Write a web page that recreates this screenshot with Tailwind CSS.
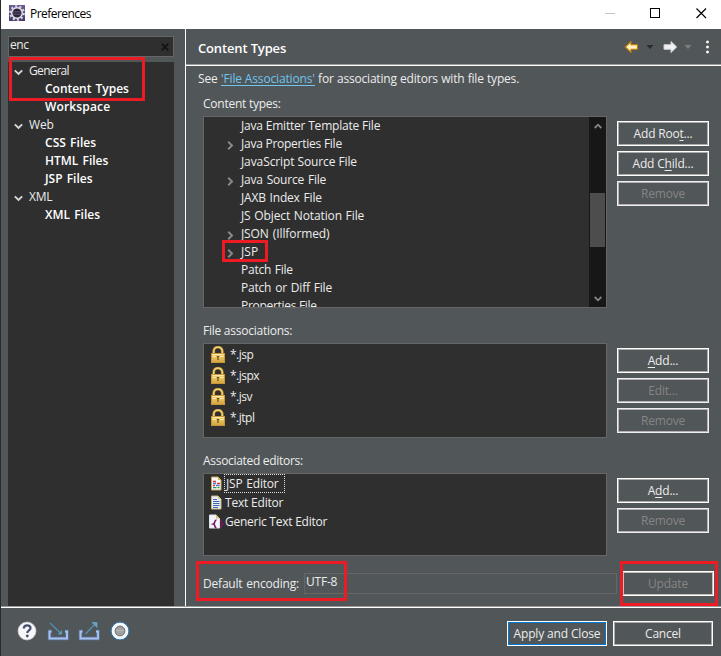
<!DOCTYPE html>
<html lang="en">
<head>
<meta charset="utf-8">
<title>Preferences</title>
<script src="https://cdn.jsdelivr.net/npm/@tailwindcss/browser@4"></script>
</head>
<body class="w-[721px] h-[656px] overflow-hidden">
<svg class="absolute h-0 w-0">
  <defs>
    <linearGradient id="gold" x1="0" y1="0" x2="0" y2="1"><stop offset="0" stop-color="#f3d878"/><stop offset="1" stop-color="#d3a33c"/></linearGradient>
    <linearGradient id="lilac" x1="0" y1="0" x2="0" y2="1"><stop offset="0" stop-color="#6b5a94"/><stop offset="1" stop-color="#463a6c"/></linearGradient>
    <symbol id="lock" viewBox="0 0 14 17">
      <path d="M2.700 8V5.300a4.300 4.200 0 0 1 8.600 0V8" fill="none" stroke="#b98924" stroke-width="2.800"/>
      <path d="M2.700 8V5.300a4.300 4.200 0 0 1 8.600 0V8" fill="none" stroke="#f0d98c" stroke-width="1.300"/>
      <rect x=".5" y="7.500" width="13" height="9" fill="url(#gold)" stroke="#c9973a"/>
      <path d="M1.500 8.500h11M1.500 10.500h11" stroke="#fae9a8" stroke-width="1"/>
      <path d="M5.700 10.500h2.600M7 10v4" stroke="#6d4a13" stroke-width="1.200"/>
    </symbol>
    <symbol id="open" viewBox="0 0 9 7"><path d="M.8 1.300 4.500 5l3.700-3.700" fill="none" stroke="#d6d6d6" stroke-width="1.900"/></symbol>
    <symbol id="closed" viewBox="0 0 7 9"><path d="M1.200.8 5 4.500 1.200 8.200" fill="none" stroke="#8a8a8a" stroke-width="1.900"/></symbol>
  </defs>
</svg>
<div class="relative flex h-[656px] w-[721px] flex-col border-l border-[#2a2a2a] bg-[#515658] font-['Open_Sans','Noto_Sans',sans-serif] text-[12px] leading-[18px] tracking-[-0.2px] text-[#ececec] whitespace-nowrap">

  <!-- Title bar -->
  <header class="flex h-[29px] shrink-0 items-center bg-white pl-2 text-black">
    <svg class="mt-[-3px] h-4 w-4" viewBox="0 0 16 16">
      <rect width="16" height="16" fill="url(#lilac)"/>
      <circle cx="8" cy="8" r="6.800" fill="none" stroke="#d8d5de" stroke-width="2" stroke-dasharray="2.200 2.070"/>
      <circle cx="8" cy="8" r="5.300" fill="#29243a" stroke="#e8e6ec" stroke-width="1.500"/>
      <path d="M4 6.500h8M3.500 8h9M4 9.500h8" stroke="#5e5575" stroke-width=".7"/>
    </svg>
    <span class="mt-[-2px] ml-[5px] tracking-[-0.55px]">Preferences</span>
    <svg class="ml-auto mr-[14px] mt-[-3px] h-3 w-[102px]" viewBox="0 0 102 12">
      <path d="M0 6.500h10" stroke="#c4c4c4"/>
      <rect x="45.500" y="1.500" width="9" height="9" fill="none" stroke="#000"/>
      <path d="M91.500 1.500l9.500 9.500M101 1.500l-9.500 9.500" stroke="#000" stroke-width="1.150"/>
    </svg>
  </header>

  <main class="flex h-[577px] shrink-0">
    <!-- Navigation -->
    <aside class="w-[184px] shrink-0 pt-[7px] pl-[7px]">
      <div class="flex h-[21px] w-[166px] items-center border border-[#666] bg-[#2f2f2f] pl-px pr-1">
        <span class="mt-[-4px] tracking-[-0.4px]">enc</span>
        <svg class="ml-auto h-2 w-2" viewBox="0 0 8 8"><path d="M.7.700l6.600 6.600M7.300.7.700 7.300" stroke="#131313" stroke-width="1.700"/></svg>
      </div>
      <nav class="mt-[5px] h-[544px] w-[166px] bg-[#2f2f2f]">
        <div class="flex h-[18px] items-center"><svg class="mt-[2px] ml-[6px] mr-[6px] h-[7px] w-[9px]"><use href="#open"/></svg><span class="tracking-[-0.6px]">General</span></div>
        <div class="h-[18px] pl-[37px] font-semibold text-white"><span class="tracking-[-0.02px] [word-spacing:1px]">Content Types</span></div>
        <div class="h-[18px] pl-[37px] font-semibold text-white"><span class="tracking-[0.15px]">Workspace</span></div>
        <div class="flex h-[18px] items-center"><svg class="mt-[2px] ml-[6px] mr-[6px] h-[7px] w-[9px]"><use href="#open"/></svg><span>Web</span></div>
        <div class="h-[18px] pl-[37px] font-semibold text-white"><span class="tracking-[0.05px] [word-spacing:1px]">CSS Files</span></div>
        <div class="h-[18px] pl-[37px] font-semibold text-white"><span class="tracking-[0px] [word-spacing:1px]">HTML Files</span></div>
        <div class="h-[18px] pl-[37px] font-semibold text-white"><span class="tracking-[0px] [word-spacing:1px]">JSP Files</span></div>
        <div class="flex h-[18px] items-center"><svg class="mt-[2px] ml-[6px] mr-[6px] h-[7px] w-[9px]"><use href="#open"/></svg><span>XML</span></div>
        <div class="h-[18px] pl-[37px] font-semibold text-white"><span class="tracking-[0px] [word-spacing:1px]">XML Files</span></div>
      </nav>
    </aside>

    <section class="flex w-[536px] flex-col border-l border-white">
      <div class="flex h-[37px] shrink-0 items-center border-b border-white pl-3 shadow-[inset_0_-1px_0_#999]">
        <h1 class="mt-[2px] text-[13px] font-semibold text-white tracking-[-0.15px]">Content Types</h1>
        <svg class="ml-auto mr-[9px] h-[16px] w-[88px]" viewBox="0 0 88 16">
          <path d="M1.300 8 7 2.500v3.200h6.500v4.600H7v3.200z" fill="#fff3bd" stroke="#b97a14" stroke-width="1.200" stroke-linejoin="round"/>
          <path d="M22.500 6h7l-3.500 4z" fill="#2b2b2b"/>
          <path d="M52.700 8 47 2.500v3.200h-7v4.600h7v3.200z" fill="#f2f2f2" stroke="#cfcfcf" stroke-linejoin="round"/>
          <path d="M60.500 6h7L64 10z" fill="#7b7f80"/>
          <g fill="#fff" stroke="#333" stroke-width=".5"><circle cx="83.500" cy="3" r="1.800"/><circle cx="83.500" cy="8" r="1.800"/><circle cx="83.500" cy="13" r="1.800"/></g>
        </svg>
      </div>

      <div class="pl-[17px]">
        <p class="-ml-[5px] mt-[4px] h-[18px]"><span class="[word-spacing:0.6px]">See </span><a class="inline-block h-[16px] border-b border-[#6fc5ee] leading-[18px] tracking-[-0.15px] text-[#6fc5ee]">'File Associations'</a><span class="[word-spacing:0.4px]"> for associating editors with file types.</span></p>
        <p class="mt-[7px] h-[21px]"><span class="tracking-[-0.25px]">Content types:</span></p>
        <div class="flex h-[192px] gap-[10px]">
          <div class="flex w-[404px] overflow-hidden border border-[#666] bg-[#2f2f2f]">
            <ul class="w-[385px]">
              <li class="h-[18px] pl-[37px]"><span>Java Emitter Template File</span></li>
              <li class="flex h-[18px] items-center pl-[23px]"><svg class="mt-[3px] mr-[7px] h-[9px] w-[7px]"><use href="#closed"/></svg><span class="tracking-[-0.25px]">Java Properties File</span></li>
              <li class="h-[18px] pl-[37px]"><span class="tracking-[-0.1px]">JavaScript Source File</span></li>
              <li class="flex h-[18px] items-center pl-[23px]"><svg class="mt-[3px] mr-[7px] h-[9px] w-[7px]"><use href="#closed"/></svg><span class="[word-spacing:1px]">Java Source File</span></li>
              <li class="h-[18px] pl-[37px]"><span class="[word-spacing:1px]">JAXB Index File</span></li>
              <li class="h-[18px] pl-[37px]"><span class="tracking-[-0.1px] [word-spacing:0.6px]">JS Object Notation File</span></li>
              <li class="flex h-[18px] items-center pl-[23px]"><svg class="mt-[3px] mr-[7px] h-[9px] w-[7px]"><use href="#closed"/></svg><span class="tracking-[-0.1px] [word-spacing:1px]">JSON (Illformed)</span></li>
              <li class="flex h-[18px] items-center pl-[23px]"><svg class="mt-[3px] mr-[7px] h-[9px] w-[7px]"><use href="#closed"/></svg><span class="tracking-[0.1px]">JSP</span></li>
              <li class="h-[18px] pl-[37px]"><span class="[word-spacing:0.5px]">Patch File</span></li>
              <li class="h-[18px] pl-[37px]"><span class="[word-spacing:1px]">Patch or Diff File</span></li>
              <li class="h-[18px] pl-[37px]"><span class="tracking-[-0.3px]">Properties File</span></li>
            </ul>
            <div class="flex w-[17px] flex-col items-center bg-[#171717]">
              <svg class="mt-[6px] h-[6px] w-[8px]" viewBox="0 0 8 6"><path d="M.7 5 4 1.700 7.300 5" fill="none" stroke="#858585" stroke-width="1.800"/></svg>
              <div class="mt-[64px] h-[54px] w-[15px] bg-[#4d4d4d]"></div>
              <svg class="mt-auto mb-[5px] h-[6px] w-[8px]" viewBox="0 0 8 6"><path d="M.7 1 4 4.300 7.300 1" fill="none" stroke="#858585" stroke-width="1.800"/></svg>
            </div>
          </div>
          <div class="flex flex-col gap-[5px] pt-[5px]">
            <button class="h-[25px] w-[92px] border border-white shadow-[inset_0_0_0_1px_#aaa]">Add Roo<u class="underline-offset-2">t</u>...</button>
            <button class="h-[25px] w-[92px] border border-white shadow-[inset_0_0_0_1px_#aaa]">Add C<u class="underline-offset-2">h</u>ild...</button>
            <button class="h-[25px] w-[92px] border border-[#f0f0f0] text-[#858585] shadow-[inset_0_0_0_1px_#b5b0b5]">Remove</button>
          </div>
        </div>

        <p class="mt-[14px] h-[21px]"><span class="tracking-[-0.25px]">File associations:</span></p>
        <div class="flex h-[95px] gap-[10px]">
          <ul class="w-[404px] border border-[#666] bg-[#2f2f2f] pl-[7px]">
            <li class="flex h-[21px] items-center gap-[5px]"><svg class="mt-[-1px] h-[17px] w-[14px]"><use href="#lock"/></svg><span class="tracking-[-0.5px]">*.jsp</span></li>
            <li class="flex h-[21px] items-center gap-[5px]"><svg class="mt-[-1px] h-[17px] w-[14px]"><use href="#lock"/></svg><span class="tracking-[-0.5px]">*.jspx</span></li>
            <li class="flex h-[21px] items-center gap-[5px]"><svg class="mt-[-1px] h-[17px] w-[14px]"><use href="#lock"/></svg><span class="tracking-[-0.5px]">*.jsv</span></li>
            <li class="flex h-[21px] items-center gap-[5px]"><svg class="mt-[-1px] h-[17px] w-[14px]"><use href="#lock"/></svg><span class="tracking-[-0.5px]">*.jtpl</span></li>
          </ul>
          <div class="flex flex-col gap-[5px] pt-[5px]">
            <button class="h-[25px] w-[92px] border border-white shadow-[inset_0_0_0_1px_#aaa]"><u class="underline-offset-2">A</u>dd...</button>
            <button class="h-[25px] w-[92px] border border-[#f0f0f0] text-[#858585] shadow-[inset_0_0_0_1px_#b5b0b5]">Edit...</button>
            <button class="h-[25px] w-[92px] border border-[#f0f0f0] text-[#858585] shadow-[inset_0_0_0_1px_#b5b0b5]">Remove</button>
          </div>
        </div>

        <p class="mt-[14px] h-[21px]"><span class="tracking-[-0.3px]">Associated editors:</span></p>
        <div class="flex h-[83px] gap-[10px]">
          <ul class="w-[404px] border border-[#666] bg-[#2f2f2f] pl-[5px]">
            <li class="flex h-[19px] items-center">
              <svg class="mr-[1px] h-[15px] w-[14px]" viewBox="0 0 14 15"><path d="M2.500 1h6.500l3 3v10H2.500z" fill="#f8fafc" stroke="#c8a45a"/><path d="M9 1v3h3z" fill="#d9b254"/><path d="M4 5.500h3M8 7.500h3M4 9.500h2" stroke="#e03030" stroke-width="1.300"/><path d="M4 7.500h3M7 9.500h3.500" stroke="#4a78c8" stroke-width="1.300"/><path d="M4 11.700h3.500M8.500 11.700h2" stroke="#209a5a" stroke-width="1.300"/></svg>
              <span class="box-border flex h-[19px] w-[61px] items-center border border-dotted border-[#ddd] pl-px"><span class="[word-spacing:1px]">JSP Editor</span></span>
            </li>
            <li class="flex h-[19px] items-center">
              <svg class="mr-[2px] h-[15px] w-[14px]" viewBox="0 0 14 15"><path d="M2.500 1h6.500l3 3v10H2.500z" fill="#e8f1fb" stroke="#c5b583"/><path d="M9 1v3h3z" fill="#d9c284"/><path d="M4 4.500h4M4 6.500h6.500M4 8.500h6.500M4 10.500h6.500M4 12.500h5" stroke="#4467ac"/></svg>
              <span>Text Editor</span>
            </li>
            <li class="flex h-[19px] items-center">
              <svg class="mr-[2px] h-[15px] w-[14px] overflow-visible" viewBox="0 0 14 15"><path d="M.5 1H7l3.500 3.500V14H.5z" fill="#f0f4fa" stroke="#e0e4ea"/><path d="M7 .5v4h4z" fill="#d8bd6b"/><path d="M7.500 6C5 6 6.500 9.300 4.500 10 6.500 10.400 5 14 7.500 14" fill="none" stroke="#7a155e" stroke-width="1.700"/><path d="M11 6c2.500 0 .8 3.300 2.500 4-1.700.4 0 4-2.500 4" fill="none" stroke="#7a155e" stroke-width="1.500"/></svg>
              <span class="tracking-[-0.25px]">Generic Text Editor</span>
            </li>
          </ul>
          <div class="flex flex-col gap-[5px] pt-[5px]">
            <button class="h-[25px] w-[92px] border border-white shadow-[inset_0_0_0_1px_#aaa]">A<u class="underline-offset-2">d</u>d...</button>
            <button class="h-[25px] w-[92px] border border-[#f0f0f0] text-[#858585] shadow-[inset_0_0_0_1px_#b5b0b5]">Remove</button>
          </div>
        </div>

        <div class="mt-[15px] flex h-[25px] items-center">
          <span class="w-[101px]"><span class="[word-spacing:1px]">Default encoding:</span></span>
          <div class="h-[21px] w-[313px] border border-[#666] pl-px leading-[16px]"><span>UTF-8</span></div>
          <button class="ml-[5px] h-[25px] w-[92px] border border-white text-[#858585] shadow-[inset_0_0_0_1px_#c4c0b8]">Update</button>
        </div>
      </div>
    </section>
  </main>

  <!-- Dialog buttons -->
  <div class="h-px shrink-0 bg-[#999]"></div>
  <footer class="flex h-[49px] shrink-0 items-start border-t border-white pl-4 pr-2 pt-[13px]">
    <svg class="mt-[-1px] h-[22px] w-[116px]" viewBox="0 0 116 22">
      <circle cx="10" cy="11" r="9" fill="#f6f6f8" stroke="#c9ccd3" stroke-width=".7"/>
      <path d="M6.800 8.600C6.800 4.200 13.500 4.500 13.500 8c0 2.500-3.200 2.300-3.200 5" fill="none" stroke="#46516f" stroke-width="2.300"/><circle cx="10.300" cy="16" r="1.400" fill="#46516f"/>
      <g id="tray" fill="none"><path d="M34.500 11.500h-2v7h17.500v-7h-2" stroke="#5877aa" stroke-width="3.400"/><path d="M34.500 11.500h-2v7h17.500v-7h-2" stroke="#a9c1e6" stroke-width="1.900"/></g>
      <path d="M33 3l10.500 10" stroke="#4f91b5" stroke-width="1.300"/><path d="M45 14.500v-4.500l-4.500 4.500z" fill="#5a9cbd"/>
      <use href="#tray" x="31"/>
      <path d="M68.500 14 77 5" stroke="#4f91b5" stroke-width="1.300"/><path d="M75 2.500h5v5z" fill="#6aa3c4" stroke="#6aa3c4" stroke-width=".7"/>
      <circle cx="103" cy="11" r="8.900" fill="#f5f8fb" stroke="#2e77b4" stroke-width="1"/>
      <circle cx="103" cy="11" r="4.900" fill="#a0a0a0" stroke="#707070"/><path d="M99.500 10.500h7" stroke="#b8b8b8"/>
    </svg>
    <button class="ml-auto h-[25px] w-[100px] border border-white p-0 outline-1 -outline-offset-2 outline-[#0078d7]"><span class="tracking-[-0.15px]">Apply and Close</span></button>
    <button class="ml-[6px] h-[25px] w-[100px] border border-white shadow-[inset_0_0_0_1px_#aaa]"><span>Cancel</span></button>
  </footer>

  <!-- Highlight boxes -->
  <div class="absolute left-[8px] top-[57px] h-[44px] w-[136px] border-3 border-[#ed1c24]"></div>
  <div class="absolute left-[221px] top-[240px] h-[22px] w-[46px] border-3 border-[#ed1c24]"></div>
  <div class="absolute left-[195px] top-[561px] h-[40px] w-[151px] border-3 border-[#ed1c24]"></div>
  <div class="absolute left-[619px] top-[561px] h-[45px] w-[98px] border-3 border-[#ed1c24]"></div>
</div>
</body>
</html>
